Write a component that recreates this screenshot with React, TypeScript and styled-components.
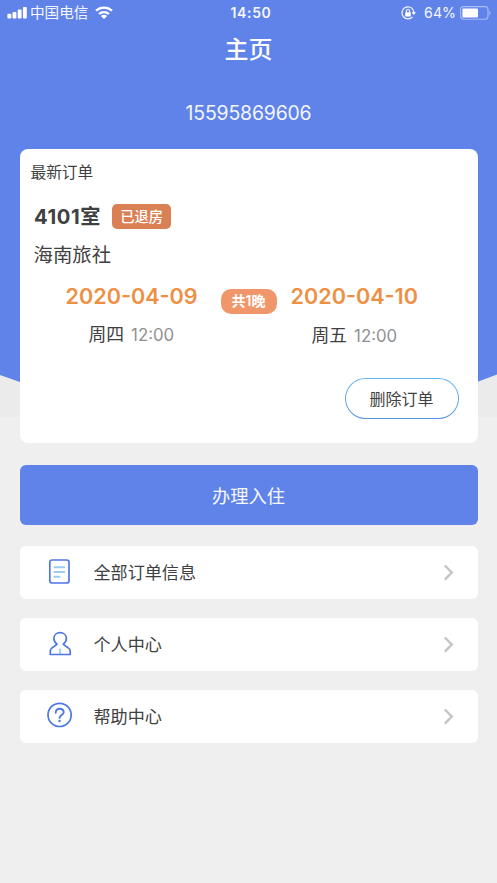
import React from 'react';
import styled, { createGlobalStyle } from 'styled-components';

const GlobalStyle = createGlobalStyle`
  * { box-sizing: border-box; }
  body {
    margin: 0;
    background: #efefef;
    font-family: Inter, "Noto Sans CJK SC", sans-serif;
    color: #404040;
    -webkit-font-smoothing: antialiased;
  }
  button { font: inherit; color: inherit; border: 0; padding: 0; cursor: pointer; }
`;

const Screen = styled.main`
  position: relative;
  isolation: isolate;
  width: 497px;
  height: 883px;
  overflow: hidden;
  background: #efefef;
  white-space: nowrap;
`;

const Backdrop = styled.div`
  position: absolute;
  inset: 0 0 auto;
  height: 417px;
  z-index: -1;
  background: #ebebeb;
  &::before {
    content: '';
    display: block;
    height: 417px;
    background: #6083e9;
    clip-path: polygon(0 0, 100% 0, 100% 374.5px, 477px 382px, 20px 382px, 0 375px);
  }
`;

const StatusBar = styled.header`
  display: grid;
  grid-template-columns: 1fr auto 1fr;
  align-items: center;
  height: 26px;
  padding: 0 6px 0 7px;
  color: #f5f7ff;
  font-size: 14.6px;
  line-height: 26px;
`;

const StatusGroup = styled.div<{ $end?: boolean }>`
  display: flex;
  align-items: center;
  justify-content: ${p => (p.$end ? 'flex-end' : 'flex-start')};
  svg { display: block; flex: none; }
`;

const Carrier = styled.span`margin: 0 7px 0 3px;`;
const Clock = styled.time`
  padding-left: 4px;
  font-size: 14px;
  font-weight: 600;
  letter-spacing: 0.65px;
`;
const Percent = styled.span`
  margin: 0 4px 0 8px;
  font-size: 14.2px;
`;

const Title = styled.h1`
  margin: 0;
  height: 46px;
  padding-top: 1px;
  font-size: 24px;
  font-weight: 500;
  line-height: 46px;
  text-align: center;
  color: #fff;
`;

const Phone = styled.div`
  height: 77px;
  padding-top: 28px;
  font-size: 19.4px;
  line-height: 26px;
  letter-spacing: -0.15px;
  text-align: center;
  color: #f3f6ff;
`;

const Content = styled.div`
  display: flex;
  flex-direction: column;
  padding: 0 19.5px;
`;

const OrderCard = styled.section`
  display: flex;
  flex-direction: column;
  height: 294px;
  border-radius: 8px;
  background: #fff;
`;

const CardTitle = styled.h2`
  margin: 0;
  padding: 12px 0 0 11px;
  font-size: 15.7px;
  font-weight: 400;
  line-height: 24px;
`;

const RoomRow = styled.div`
  display: flex;
  align-items: center;
  gap: 11px;
  height: 25px;
  margin: 19px 0 0 14.5px;
`;

const Room = styled.strong`
  font-size: 20.2px;
  font-weight: 700;
  line-height: 25px;
  letter-spacing: 0.6px;
`;

const Tag = styled.span<{ $pill?: boolean }>`
  display: flex;
  align-items: center;
  justify-content: center;
  width: ${p => (p.$pill ? 56 : 59)}px;
  height: 24.5px;
  border-radius: ${p => (p.$pill ? 10 : 5)}px;
  background: ${p => (p.$pill ? '#f0966a' : '#da8055')};
  color: #fff;
  font-size: ${p => (p.$pill ? 14 : 14.3)}px;
  font-weight: ${p => (p.$pill ? 600 : 500)};
  line-height: 24px;
`;

const Hotel = styled.p`
  margin: 12px 0 0 14px;
  font-size: 19.4px;
  line-height: 28px;
`;

const Stay = styled.div`
  display: grid;
  grid-template-columns: 131px 56px 129px;
  column-gap: 24px;
  margin: 13px 0 0 46px;
  & > span { margin-top: 7px; }
  & > :last-child { margin-left: -10px; }
`;

const StayDate = styled.div`
  display: flex;
  flex-direction: column;
  gap: 11px;
`;

const DateText = styled.time`
  color: #ee9044;
  font-size: 21.6px;
  font-weight: 600;
  line-height: 28px;
`;

const DayRow = styled.div<{ $late?: boolean }>`
  display: flex;
  align-items: center;
  gap: 7px;
  margin-top: ${p => (p.$late ? 1 : 0)}px;
  margin-left: ${p => (p.$late ? 21 : 23)}px;
  font-size: 17.8px;
  line-height: 28px;
`;

const Hour = styled.span`
  color: #909090;
  font-size: 16.8px;
`;

const DeleteButton = styled.button`
  align-self: flex-end;
  width: 114px;
  height: 41px;
  margin: 28px 19px 0 0;
  padding-bottom: 2px;
  border: 1.5px solid transparent;
  border-radius: 21px;
  background: linear-gradient(#fff, #fff) padding-box,
    linear-gradient(#63b8ef, #5795e5) border-box;
  font-size: 16px;
`;

const CheckIn = styled.button`
  height: 60px;
  margin-top: 22px;
  padding-bottom: 1px;
  border-radius: 6px;
  background: #6083e9;
  color: #f7f9ff;
  font-size: 18.3px;
`;

const Menu = styled.nav`
  display: flex;
  flex-direction: column;
  gap: 19px;
  margin-top: 20.5px;
`;

const MenuItem = styled.button`
  display: grid;
  grid-template-columns: 26px 1fr 12px;
  column-gap: 21px;
  align-items: center;
  height: 53px;
  padding: 0 22.5px 0 27px;
  border-radius: 6px;
  background: #fff;
  font-size: 17.1px;
  text-align: left;
  svg { display: block; }
`;

const MenuLabel = styled.span`padding-bottom: 1px;`;

const SignalIcon = () => (
  <svg width="20" height="14" viewBox="0 0 20 14" fill="#fff">
    <rect x="0.4" y="7.8" width="3.9" height="4.7" rx="1" />
    <rect x="5.5" y="6" width="3.9" height="6.5" rx="1" />
    <rect x="10.7" y="3.5" width="3.9" height="9" rx="1" />
    <rect x="15.9" y="1" width="3.9" height="11.5" rx="1" />
  </svg>
);

const WifiIcon = () => (
  <svg width="18" height="14" viewBox="0 0 18 14" fill="none" stroke="#fff" strokeWidth="2.3">
    <path d="M1 4.7C5.5 .6 12.5 .6 17 4.7" />
    <path d="M4 8C6.8 5.5 11.2 5.5 14 8" />
    <path d="M5.8 9.9Q9 7.5 12.2 9.9L9 13.1Z" fill="#fff" stroke="none" />
  </svg>
);

const RotationLockIcon = () => (
  <svg width="15" height="14" viewBox="0 0 15 14" fill="none" stroke="#f5f7ff" strokeWidth="1.2">
    <path d="M12.4 4.2A6 6 0 1 0 11.5 10.8" />
    <path d="M12.2 4.2Q12.8 5.2 12.8 7" />
    <path d="M10.6 6.2H15L12.8 9Z" fill="#fff" stroke="none" />
    <rect x="4.2" y="6.2" width="5.6" height="4.2" rx=".6" fill="#fff" stroke="none" />
    <path d="M5.4 6.6V5.1a1.6 1.6 0 0 1 3.2 0V6.6" />
  </svg>
);

const BatteryIcon = () => (
  <svg width="31" height="14" viewBox="0 0 31 14">
    <rect x="0.6" y="0.6" width="27.4" height="12.6" rx="3" fill="none" stroke="#a9bbf3" strokeWidth="1.1" />
    <rect x="2.4" y="2.4" width="15.6" height="9" rx="1" fill="#fff" />
    <path d="M29.3 4.7Q31.8 7 29.3 9.3Z" fill="#a9bbf3" />
  </svg>
);

const OrdersIcon = () => (
  <svg width="26" height="28" viewBox="0 0 26 28" fill="none" strokeLinecap="round">
    <rect x="2.8" y="2" width="19.2" height="23" rx="2.3" stroke="#4f76e5" strokeWidth="1.7" />
    <path d="M7.5 9.3H17.2M7.5 14H17.2M7.5 18.7H12.5" stroke="#9ccbed" strokeWidth="2" />
  </svg>
);

const PersonIcon = () => (
  <svg width="26" height="28" viewBox="0 0 26 28" fill="none">
    <path d="M13.1 18.7V24.4" stroke="#a5d2e9" strokeWidth="2.1" />
    <path d="M10 14.2C8 12.7 6.9 10.5 6.9 8.6C6.9 5 9.6 2.7 13.1 2.7S19.4 5 19.4 8.6C19.4 10.5 18.2 12.7 16.3 14.2L21.9 18.4C22.9 19.1 23.2 20 23.2 21.2V24.5H3.3V21.2C3.3 20 3.6 19.1 4.5 18.4Z" stroke="#4f76e5" strokeWidth="1.7" strokeLinejoin="round" />
  </svg>
);

const HelpIcon = () => (
  <svg width="26" height="28" viewBox="0 0 26 28" fill="none" stroke="#4f76e5" strokeLinecap="round">
    <circle cx="12.6" cy="12.9" r="11.6" strokeWidth="1.7" />
    <path d="M8.7 10.7C8.7 8.2 10.4 6.7 12.7 6.7S16.7 8.2 16.7 10.3C16.7 12.9 12.6 13.2 12.6 15.9" strokeWidth="1.9" />
    <circle cx="12.6" cy="19" r="1.2" fill="#4f76e5" stroke="none" />
  </svg>
);

const Chevron = () => (
  <svg width="12" height="18" viewBox="0 0 12 18" fill="none" stroke="#c5c5c8" strokeWidth="2.4">
    <path d="M1.8 2.5L8.9 9.6L1.8 16.7" />
  </svg>
);

const menuItems = [
  { label: '全部订单信息', Icon: OrdersIcon },
  { label: '个人中心', Icon: PersonIcon },
  { label: '帮助中心', Icon: HelpIcon },
];

export default function App() {
  return (
    <>
      <GlobalStyle />
      <Screen lang="zh-CN">
        <Backdrop />
        <StatusBar>
          <StatusGroup><SignalIcon /><Carrier>中国电信</Carrier><WifiIcon /></StatusGroup>
          <Clock>14:50</Clock>
          <StatusGroup $end><RotationLockIcon /><Percent>64%</Percent><BatteryIcon /></StatusGroup>
        </StatusBar>
        <Title>主页</Title>
        <Phone>15595869606</Phone>
        <Content>
          <OrderCard>
            <CardTitle>最新订单</CardTitle>
            <RoomRow><Room>4101室</Room><Tag>已退房</Tag></RoomRow>
            <Hotel>海南旅社</Hotel>
            <Stay>
              <StayDate>
                <DateText>2020-04-09</DateText>
                <DayRow>周四<Hour>12:00</Hour></DayRow>
              </StayDate>
              <Tag $pill>共1晚</Tag>
              <StayDate>
                <DateText>2020-04-10</DateText>
                <DayRow $late>周五<Hour>12:00</Hour></DayRow>
              </StayDate>
            </Stay>
            <DeleteButton>删除订单</DeleteButton>
          </OrderCard>
          <CheckIn>办理入住</CheckIn>
          <Menu>
            {menuItems.map(({ label, Icon }) => (
              <MenuItem key={label}><Icon /><MenuLabel>{label}</MenuLabel><Chevron /></MenuItem>
            ))}
          </Menu>
        </Content>
      </Screen>
    </>
  );
}
